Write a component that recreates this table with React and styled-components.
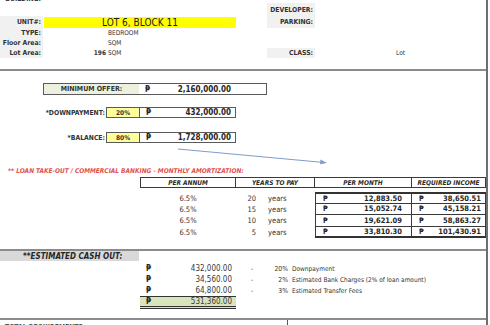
import styled, { createGlobalStyle } from "styled-components";

const GlobalStyle = createGlobalStyle`
  html, body { margin: 0; padding: 0; background: #ffffff; }
  body {
    font-family: "DejaVu Sans Condensed", "DejaVu Sans", "Liberation Sans", sans-serif;
    color: #262626;
    overflow: hidden;
  }
`;

const Sheet = styled.div`
  width: 486px;
  height: 333px;
  margin-top: -8px;
  border-right: 2px solid #6f6f6f;
  display: flex;
  flex-direction: column;
  overflow: hidden;
`;

/* ---------- property info ---------- */

const InfoGrid = styled.div`
  display: grid;
  grid-template-columns: 43px 63px 130px 31px 48px 1fr;
  grid-template-rows: 11px 13px 12px 10px 10px 10px 11px;
  border-bottom: 2px solid #8c8c8c;
  flex-shrink: 0;
`;

const InfoLabel = styled.div`
  grid-column: ${(p) => p.$col};
  grid-row: ${(p) => p.$row};
  display: flex;
  align-items: ${(p) => (p.$bottom ? "flex-end" : "center")};
  justify-content: flex-end;
  padding-right: 2px;
  background: ${(p) => (p.$shade ? "#f1f1f1" : "transparent")};
  font-size: 6.8px;
  font-weight: bold;
  color: #333;
  white-space: nowrap;
`;

const InfoValue = styled.div`
  grid-column: ${(p) => p.$col};
  grid-row: ${(p) => p.$row};
  display: flex;
  align-items: center;
  justify-content: ${(p) => p.$align || "flex-start"};
  padding: 0 ${(p) => (p.$align === "flex-end" ? "0" : "2px")};
  font-size: 6.5px;
  font-weight: ${(p) => (p.$bold ? "bold" : "normal")};
  color: #333;
  white-space: nowrap;
`;

const UnitBanner = styled.div`
  grid-column: 2 / span 2;
  grid-row: 3;
  margin: 1px 0 0 1px;
  background: #ffff00;
  display: flex;
  align-items: center;
  justify-content: center;
  font-size: 10px;
  color: #1a1a1a;
`;

/* ---------- offer + loan ---------- */

const OfferSection = styled.section`
  height: 180px;
  padding-top: 12px;
  box-sizing: border-box;
  display: flex;
  flex-direction: column;
  border-bottom: 2px solid #8c8c8c;
  flex-shrink: 0;
`;

const OfferBox = styled.div`
  margin-left: 43px;
  width: 224px;
  height: 12px;
  box-sizing: border-box;
  border: 1px solid #5a5a5a;
  display: grid;
  grid-template-columns: 95px 96px 1fr;
`;

const OfferLabel = styled.div`
  background: #ebf1de;
  display: flex;
  align-items: center;
  justify-content: center;
  font-size: 7px;
  font-weight: bold;
  color: #333;
`;

const Money = styled.div`
  display: flex;
  align-items: center;
  justify-content: space-between;
  padding: 0 4px 0 6px;
  font-size: 8px;
  font-weight: ${(p) => (p.$light ? "normal" : "bold")};
  color: ${(p) => (p.$light ? "#3a3a3a" : "#262626")};
  white-space: nowrap;
`;

const Peso = styled.span`
  font-weight: bold;
  color: #262626;
`;

const SplitRow = styled.div`
  display: grid;
  grid-template-columns: 106px 34px 96px;
  height: 10px;
  margin-top: ${(p) => p.$gap}px;
`;

const FieldLabel = styled.div`
  display: flex;
  align-items: center;
  justify-content: flex-end;
  padding-right: 1px;
  font-size: 6.8px;
  font-weight: bold;
  color: #333;
  white-space: nowrap;
`;

const PctBox = styled.div`
  background: #ffff99;
  border: 1px solid #5a5a5a;
  display: flex;
  align-items: center;
  justify-content: center;
  font-size: 6.5px;
  font-weight: bold;
  color: #333;
`;

const MoneyBox = styled(Money)`
  border: 1px solid #5a5a5a;
  border-left: none;
`;

const ArrowArt = styled.svg`
  display: block;
  width: 486px;
  height: 24px;
  flex-shrink: 0;
`;

const LoanHeading = styled.div`
  height: 10px;
  padding-left: 8px;
  display: flex;
  align-items: center;
  font-size: 6.5px;
  font-weight: bold;
  font-style: italic;
  color: #e0504c;
  white-space: nowrap;
`;

const LoanGrid = styled.div`
  display: grid;
  grid-template-columns: 140px 96px 79px 97px 1fr;
  height: ${(p) => p.$h}px;
  margin-top: ${(p) => p.$top || 0}px;
`;

const HeadCell = styled.div`
  grid-column: ${(p) => p.$col};
  border: 1px solid #3a3a3a;
  border-left: ${(p) => (p.$col === 2 ? "1px solid #3a3a3a" : "none")};
  display: flex;
  align-items: center;
  justify-content: center;
  font-size: 6.5px;
  font-weight: bold;
  font-style: italic;
  color: #2a2a2a;
  white-space: nowrap;
`;

const RateCell = styled.div`
  grid-column: 2;
  display: flex;
  align-items: center;
  justify-content: center;
  font-size: 7.5px;
  color: #333;
`;

const YearsCell = styled.div`
  display: grid;
  grid-template-columns: 20px 1fr;
  column-gap: 12px;
  align-items: center;
  font-size: 7.5px;
  color: #333;

  & > span:first-child {
    text-align: right;
  }
`;

const AmountBox = styled(Money)`
  font-size: 7.5px;
  padding: 0 ${(p) => p.$right}px 0 7px;
  border-right: 1px solid #3a3a3a;
  border-left: ${(p) => (p.$lead ? "1px solid #3a3a3a" : "none")};
  border-top: ${(p) => (p.$first ? "2px solid #333" : "none")};
  border-bottom: ${(p) => (p.$last ? "2px solid #333" : "1px solid #3a3a3a")};
`;

/* ---------- cash out ---------- */

const CashSection = styled.section`
  height: 69px;
  box-sizing: border-box;
  border-bottom: 2px solid #8c8c8c;
  display: flex;
  flex-direction: column;
  flex-shrink: 0;
`;

const CashHeader = styled.div`
  width: 139px;
  height: 10px;
  background: #d9d9d9;
  display: flex;
  align-items: center;
  padding-left: 23px;
  box-sizing: border-box;
  font-size: 8px;
  font-weight: bold;
  font-style: italic;
  color: #262626;
  white-space: nowrap;
`;

const CashRow = styled.div`
  display: grid;
  grid-template-columns: 140px 96px 52px 1fr;
  height: 11px;
  margin-top: ${(p) => p.$top || 0}px;
`;

const CashAmount = styled(Money)`
  grid-column: 2;
  background: ${(p) => (p.$total ? "#d8e4bc" : "transparent")};
  border-top: ${(p) => (p.$total ? "1px solid #333" : "none")};
  border-bottom: ${(p) => (p.$total ? "3px double #333" : "none")};
`;

const CashPct = styled.div`
  display: flex;
  align-items: center;
  justify-content: space-between;
  padding-left: 15px;
  font-size: 6.8px;
  color: #333;
`;

const CashDesc = styled.div`
  display: flex;
  align-items: center;
  padding-left: 4px;
  font-size: 6.5px;
  color: #333;
  white-space: nowrap;
`;

const Footer = styled.div`
  display: grid;
  grid-template-columns: 288px 1fr;
  height: 16px;
`;

const FooterLabel = styled.div`
  border-right: 1px solid #555;
  padding: 3px 0 0 5px;
  font-size: 6.8px;
  font-weight: bold;
  color: #555;
  white-space: nowrap;
`;

const loans = [
  { rate: "6.5%", years: 20, month: "12,883.50", income: "38,650.51" },
  { rate: "6.5%", years: 15, month: "15,052.74", income: "45,158.21" },
  { rate: "6.5%", years: 10, month: "19,621.09", income: "58,863.27" },
  { rate: "6.5%", years: 5, month: "33,810.30", income: "101,430.91" },
];

const cashOut = [
  { amount: "432,000.00", pct: "20%", desc: "Downpayment" },
  { amount: "34,560.00", pct: "2%", desc: "Estimated Bank Charges (2% of loan amount)" },
  { amount: "64,800.00", pct: "3%", desc: "Estimated Transfer Fees" },
];

export default function App() {
  return (
    <>
      <GlobalStyle />
      <Sheet>
        <InfoGrid>
          <InfoLabel $col={1} $row={1} $bottom>BUILDING:</InfoLabel>
          <InfoLabel $col={5} $row={2} $shade>DEVELOPER:</InfoLabel>
          <InfoLabel $col={1} $row={3} $shade>UNIT#:</InfoLabel>
          <UnitBanner>LOT 6, BLOCK 11</UnitBanner>
          <InfoLabel $col={5} $row={3} $shade>PARKING:</InfoLabel>
          <InfoLabel $col={1} $row={4} $shade>TYPE:</InfoLabel>
          <InfoValue $col={3} $row={4}>BEDROOM</InfoValue>
          <InfoLabel $col={1} $row={5} $shade>Floor Area:</InfoLabel>
          <InfoValue $col={3} $row={5}>SQM</InfoValue>
          <InfoLabel $col={1} $row={6} $shade>Lot Area:</InfoLabel>
          <InfoValue $col={2} $row={6} $align="flex-end" $bold>196</InfoValue>
          <InfoValue $col={3} $row={6}>SQM</InfoValue>
          <InfoLabel $col={5} $row={6} $shade>CLASS:</InfoLabel>
          <InfoValue $col={6} $row={6} $align="center">Lot</InfoValue>
        </InfoGrid>

        <OfferSection>
          <OfferBox>
            <OfferLabel>MINIMUM OFFER:</OfferLabel>
            <Money>
              <Peso>₱</Peso>
              <span>2,160,000.00</span>
            </Money>
          </OfferBox>

          <SplitRow $gap={12}>
            <FieldLabel>*DOWNPAYMENT:</FieldLabel>
            <PctBox>20%</PctBox>
            <MoneyBox>
              <Peso>₱</Peso>
              <span>432,000.00</span>
            </MoneyBox>
          </SplitRow>

          <SplitRow $gap={15}>
            <FieldLabel>*BALANCE:</FieldLabel>
            <PctBox>80%</PctBox>
            <MoneyBox>
              <Peso>₱</Peso>
              <span>1,728,000.00</span>
            </MoneyBox>
          </SplitRow>

          <ArrowArt viewBox="0 0 486 24">
            <line x1="178" y1="7" x2="324" y2="20.5" stroke="#7d9dcb" strokeWidth="1" />
            <path d="M327 21 L320.5 17.6 L320 22.2 Z" fill="#7d9dcb" />
          </ArrowArt>

          <LoanHeading>** LOAN TAKE-OUT / COMMERCIAL BANKING - MONTHLY AMORTIZATION:</LoanHeading>

          <LoanGrid $h={11} $top={1}>
            <HeadCell $col={2}>PER ANNUM</HeadCell>
            <HeadCell $col={3}>YEARS TO PAY</HeadCell>
            <HeadCell $col={4}>PER MONTH</HeadCell>
            <HeadCell $col={5}>REQUIRED INCOME</HeadCell>
          </LoanGrid>

          {loans.map((row, i) => (
            <LoanGrid key={row.years} $h={11.5} $top={i === 0 ? 4 : 0}>
              <RateCell>{row.rate}</RateCell>
              <YearsCell>
                <span>{row.years}</span>
                <span>years</span>
              </YearsCell>
              <AmountBox $lead $right={9} $first={i === 0} $last={i === loans.length - 1}>
                <Peso>₱</Peso>
                <span>{row.month}</span>
              </AmountBox>
              <AmountBox $right={4} $first={i === 0} $last={i === loans.length - 1}>
                <Peso>₱</Peso>
                <span>{row.income}</span>
              </AmountBox>
            </LoanGrid>
          ))}
        </OfferSection>

        <CashSection>
          <CashHeader>**ESTIMATED CASH OUT:</CashHeader>
          {cashOut.map((row, i) => (
            <CashRow key={row.desc} $top={i === 0 ? 2 : 0}>
              <CashAmount $light>
                <Peso>₱</Peso>
                <span>{row.amount}</span>
              </CashAmount>
              <CashPct>
                <span>-</span>
                <span>{row.pct}</span>
              </CashPct>
              <CashDesc>{row.desc}</CashDesc>
            </CashRow>
          ))}
          <CashRow>
            <CashAmount $light $total>
              <Peso>₱</Peso>
              <span>531,360.00</span>
            </CashAmount>
          </CashRow>
        </CashSection>

        <Footer>
          <FooterLabel>TOTAL REQUIREMENTS:</FooterLabel>
          <div />
        </Footer>
      </Sheet>
    </>
  );
}
